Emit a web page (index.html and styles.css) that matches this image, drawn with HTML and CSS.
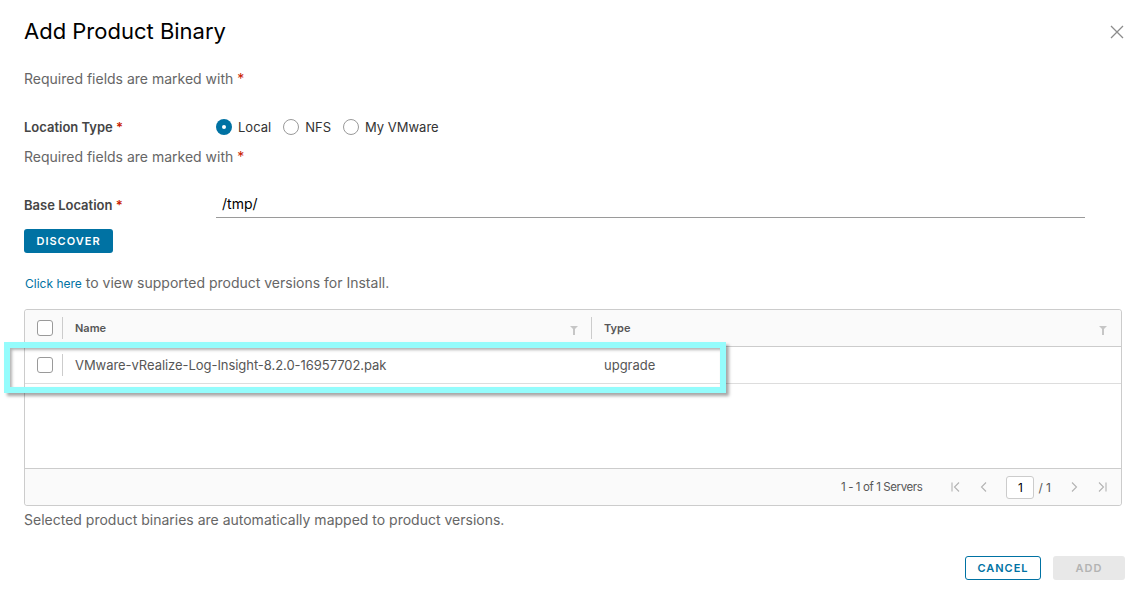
FILE: index.html
```html
<!DOCTYPE html>
<html>
<head>
<meta charset="utf-8">
<link rel="stylesheet" href="styles.css">
</head>
<body>
<div class="modal">
  <div class="modal-header">
    <h3 class="modal-title">Add Product Binary</h3>
    <button class="close" aria-label="Close">
      <svg width="16" height="16" viewBox="0 0 16 16"><path d="M2 2 L14 14 M14 2 L2 14" stroke="#8c8c8c" stroke-width="1.3" fill="none"/></svg>
    </button>
  </div>
  <p class="req first">Required fields are marked with <span class="star">*</span></p>

  <div class="form-row loc-row">
    <label class="lbl">Location Type <span class="star">*</span></label>
    <div class="radios">
      <span class="radio checked"></span><span class="rlabel">Local</span>
      <span class="radio"></span><span class="rlabel">NFS</span>
      <span class="radio"></span><span class="rlabel">My VMware</span>
    </div>
  </div>
  <p class="req second">Required fields are marked with <span class="star">*</span></p>

  <div class="form-row base-row">
    <label class="lbl">Base Location <span class="star">*</span></label>
    <div class="input">/tmp/</div>
  </div>
  <button class="btn-primary">DISCOVER</button>

  <p class="info"><a class="link">Click here</a> to view supported product versions for Install.</p>

  <div class="grid">
    <div class="grid-head">
      <div class="cell chk"><span class="cb"></span></div>
      <div class="cell name">Name<span class="filter"></span></div>
      <div class="cell type">Type<span class="filter"></span></div>
    </div>
    <div class="grid-row">
      <div class="cell chk"><span class="cb"></span></div>
      <div class="cell name">VMware-vRealize-Log-Insight-8.2.0-16957702.pak</div>
      <div class="cell type">upgrade</div>
    </div>
    <div class="grid-empty"></div>
    <div class="grid-foot">
      <span class="count">1 - 1 of 1 Servers</span>
      <span class="pg">
        <svg width="12" height="12" viewBox="0 0 12 12"><path d="M2 1.5v9 M9 1.5 L4.5 6 L9 10.5" stroke="#b3b3b3" stroke-width="1.1" fill="none"/></svg>
      </span>
      <span class="pg">
        <svg width="12" height="12" viewBox="0 0 12 12"><path d="M8 1.5 L3.5 6 L8 10.5" stroke="#b3b3b3" stroke-width="1.1" fill="none"/></svg>
      </span>
      <span class="page-input">1</span>
      <span class="of">/ 1</span>
      <span class="pg">
        <svg width="12" height="12" viewBox="0 0 12 12"><path d="M4 1.5 L8.5 6 L4 10.5" stroke="#b3b3b3" stroke-width="1.1" fill="none"/></svg>
      </span>
      <span class="pg">
        <svg width="12" height="12" viewBox="0 0 12 12"><path d="M3 1.5 L7.5 6 L3 10.5 M10 1.5v9" stroke="#b3b3b3" stroke-width="1.1" fill="none"/></svg>
      </span>
    </div>
    <div class="highlight"></div>
  </div>
  <p class="note">Selected product binaries are automatically mapped to product versions.</p>

  <div class="footer">
    <button class="btn-outline">CANCEL</button>
    <button class="btn-disabled">ADD</button>
  </div>
</div>
</body>
</html>
```
FILE: styles.css
```css
* { box-sizing: border-box; }
html, body { margin: 0; background: #fff; }
body {
  font-family: Inter, "Noto Sans", "Liberation Sans", sans-serif;
  color: #565656;
  width: 1142px;
  height: 596px;
  overflow: hidden;
}
.modal { padding: 16px 17px 0 24px; }
.modal-header { display: flex; justify-content: space-between; align-items: flex-start; }
.modal-title {
  margin: 0;
  font-weight: 400;
  font-size: 22px;
  line-height: 30px;
  color: #000;
}
.close { border: 0; background: none; padding: 0; margin-top: 8px; width: 16px; height: 16px; }
.req { margin: 0; font-size: 14px; line-height: 20px; color: #666; }
.req.first { margin-top: 23px; }
.req.second { margin-top: 10px; }
.star { color: #c92100; }
.form-row { display: flex; align-items: center; }
.loc-row { margin-top: 28px; height: 20px; }
.base-row { margin-top: 27px; height: 22px; }
.lbl { width: 192px; font-size: 13px; font-weight: 600; color: #454545; }
.radios { display: flex; align-items: center; }
.radio {
  width: 16px; height: 16px; border: 1px solid #9a9a9a; border-radius: 50%;
  display: inline-block; position: relative;
}
.radio.checked { border: 0; background: #0072a3; }
.radio.checked::after {
  content: ""; position: absolute; left: 6px; top: 6px; width: 4px; height: 4px;
  background: #fff; border-radius: 50%;
}
.rlabel { font-size: 13px; color: #333; margin-left: 6px; margin-right: 12px; }
.input {
  flex: 0 0 869px;
  font-size: 14px; color: #000; padding: 0 0 4px 6px;
  border-bottom: 1px solid #9a9a9a; line-height: 18px;
  margin-top: 2px;
}
.btn-primary {
  margin-top: 13px; display: block;
  width: 89px; height: 24px; border: 0; border-radius: 3px;
  background: #0072a3; color: #fff; font-family: inherit;
  font-size: 11px; font-weight: 600; letter-spacing: 1px; padding: 0;
}
.info { margin: 21px 0 0 1px; font-size: 14px; line-height: 18px; color: #666; }
.link { color: #0072a3; font-size: 12px; }
.grid {
  position: relative;
  margin-top: 16px;
  width: 1098px;
  border: 1px solid #ccc; border-radius: 3px;
}
.grid-head, .grid-row { display: flex; height: 37px; align-items: center; }
.grid-head { background: #fafafa; border-bottom: 1px solid #ccc; border-radius: 3px 3px 0 0; }
.grid-row { border-bottom: 1px solid #ddd; height: 37px; }
.cell { position: relative; display: flex; align-items: center; height: 100%; }
.cell.chk { width: 38px; justify-content: center; padding-left: 2px; }
.grid-head .cell.chk::after, .grid-row .cell.chk::after {
  content: ""; position: absolute; right: 0; top: 7px; bottom: 7px; width: 1px; background: #ccc;
}
.cell.name { width: 529px; padding-left: 12px; font-size: 13px; }
.cell.type { flex: 1; padding-left: 12px; font-size: 13px; }
.grid-row .cell.name { letter-spacing: -0.05px; }
.grid-head .cell { font-size: 11px; font-weight: 600; color: #565656; }
.grid-head .cell.name::after {
  content: ""; position: absolute; right: 0; top: 7px; bottom: 7px; width: 1px; background: #ccc;
}
.grid-row .cell { color: #565656; }
.filter {
  position: absolute; right: 14px; top: 16px;
  width: 0; height: 0;
  border-left: 4px solid transparent; border-right: 4px solid transparent; border-top: 4px solid #c6c6c6;
}
.filter::after {
  content: ""; position: absolute; left: -1px; top: -1px; width: 2px; height: 6px; background: #c6c6c6;
}
.cb {
  width: 16px; height: 16px; border: 1px solid #9a9a9a; border-radius: 3px; display: inline-block; background: #fff;
}
.grid-empty { height: 84px; }
.grid-foot {
  height: 37px; background: #fafafa; border-top: 1px solid #ccc; border-radius: 0 0 3px 3px;
  display: flex; align-items: center; justify-content: flex-end; padding-right: 5px;
  font-size: 12px; color: #565656;
}
.count { margin-right: 20px; letter-spacing: -0.4px; font-size: 11.5px; }
.pg { width: 12px; height: 12px; display: inline-flex; margin: 0 8px; }
.page-input {
  width: 28px; height: 23px; border: 1px solid #ccc; border-radius: 3px; background: #fff;
  display: inline-flex; align-items: center; justify-content: center; font-size: 12px; color: #000;
  margin-left: 8px;
}
.of { margin: 0 9px 0 4px; font-size: 12px; }
.highlight {
  position: absolute; left: -21px; top: 32px; width: 722px; height: 51px;
  border: 6px solid #94fcfc;
  box-shadow: 3px 3px 3px rgba(0,0,0,0.35), inset 2px 2px 3px rgba(0,0,0,0.3);
}
.note { margin: 5px 0 0 0; font-size: 14px; line-height: 18px; color: #666; }
.footer { display: flex; justify-content: flex-end; gap: 12px; margin-top: 27px; padding-right: 0; }
.btn-outline {
  width: 76px; height: 24px; border: 1px solid #0072a3; border-radius: 3px; background: #fff;
  color: #0072a3; font-family: inherit; font-size: 11px; font-weight: 600; letter-spacing: 1px; padding: 0;
}
.btn-disabled {
  width: 72px; height: 24px; border: 0; border-radius: 3px; background: #e8e8e8;
  color: #b3b3b3; font-family: inherit; font-size: 11px; font-weight: 600; letter-spacing: 1px; padding: 0;
}
```
